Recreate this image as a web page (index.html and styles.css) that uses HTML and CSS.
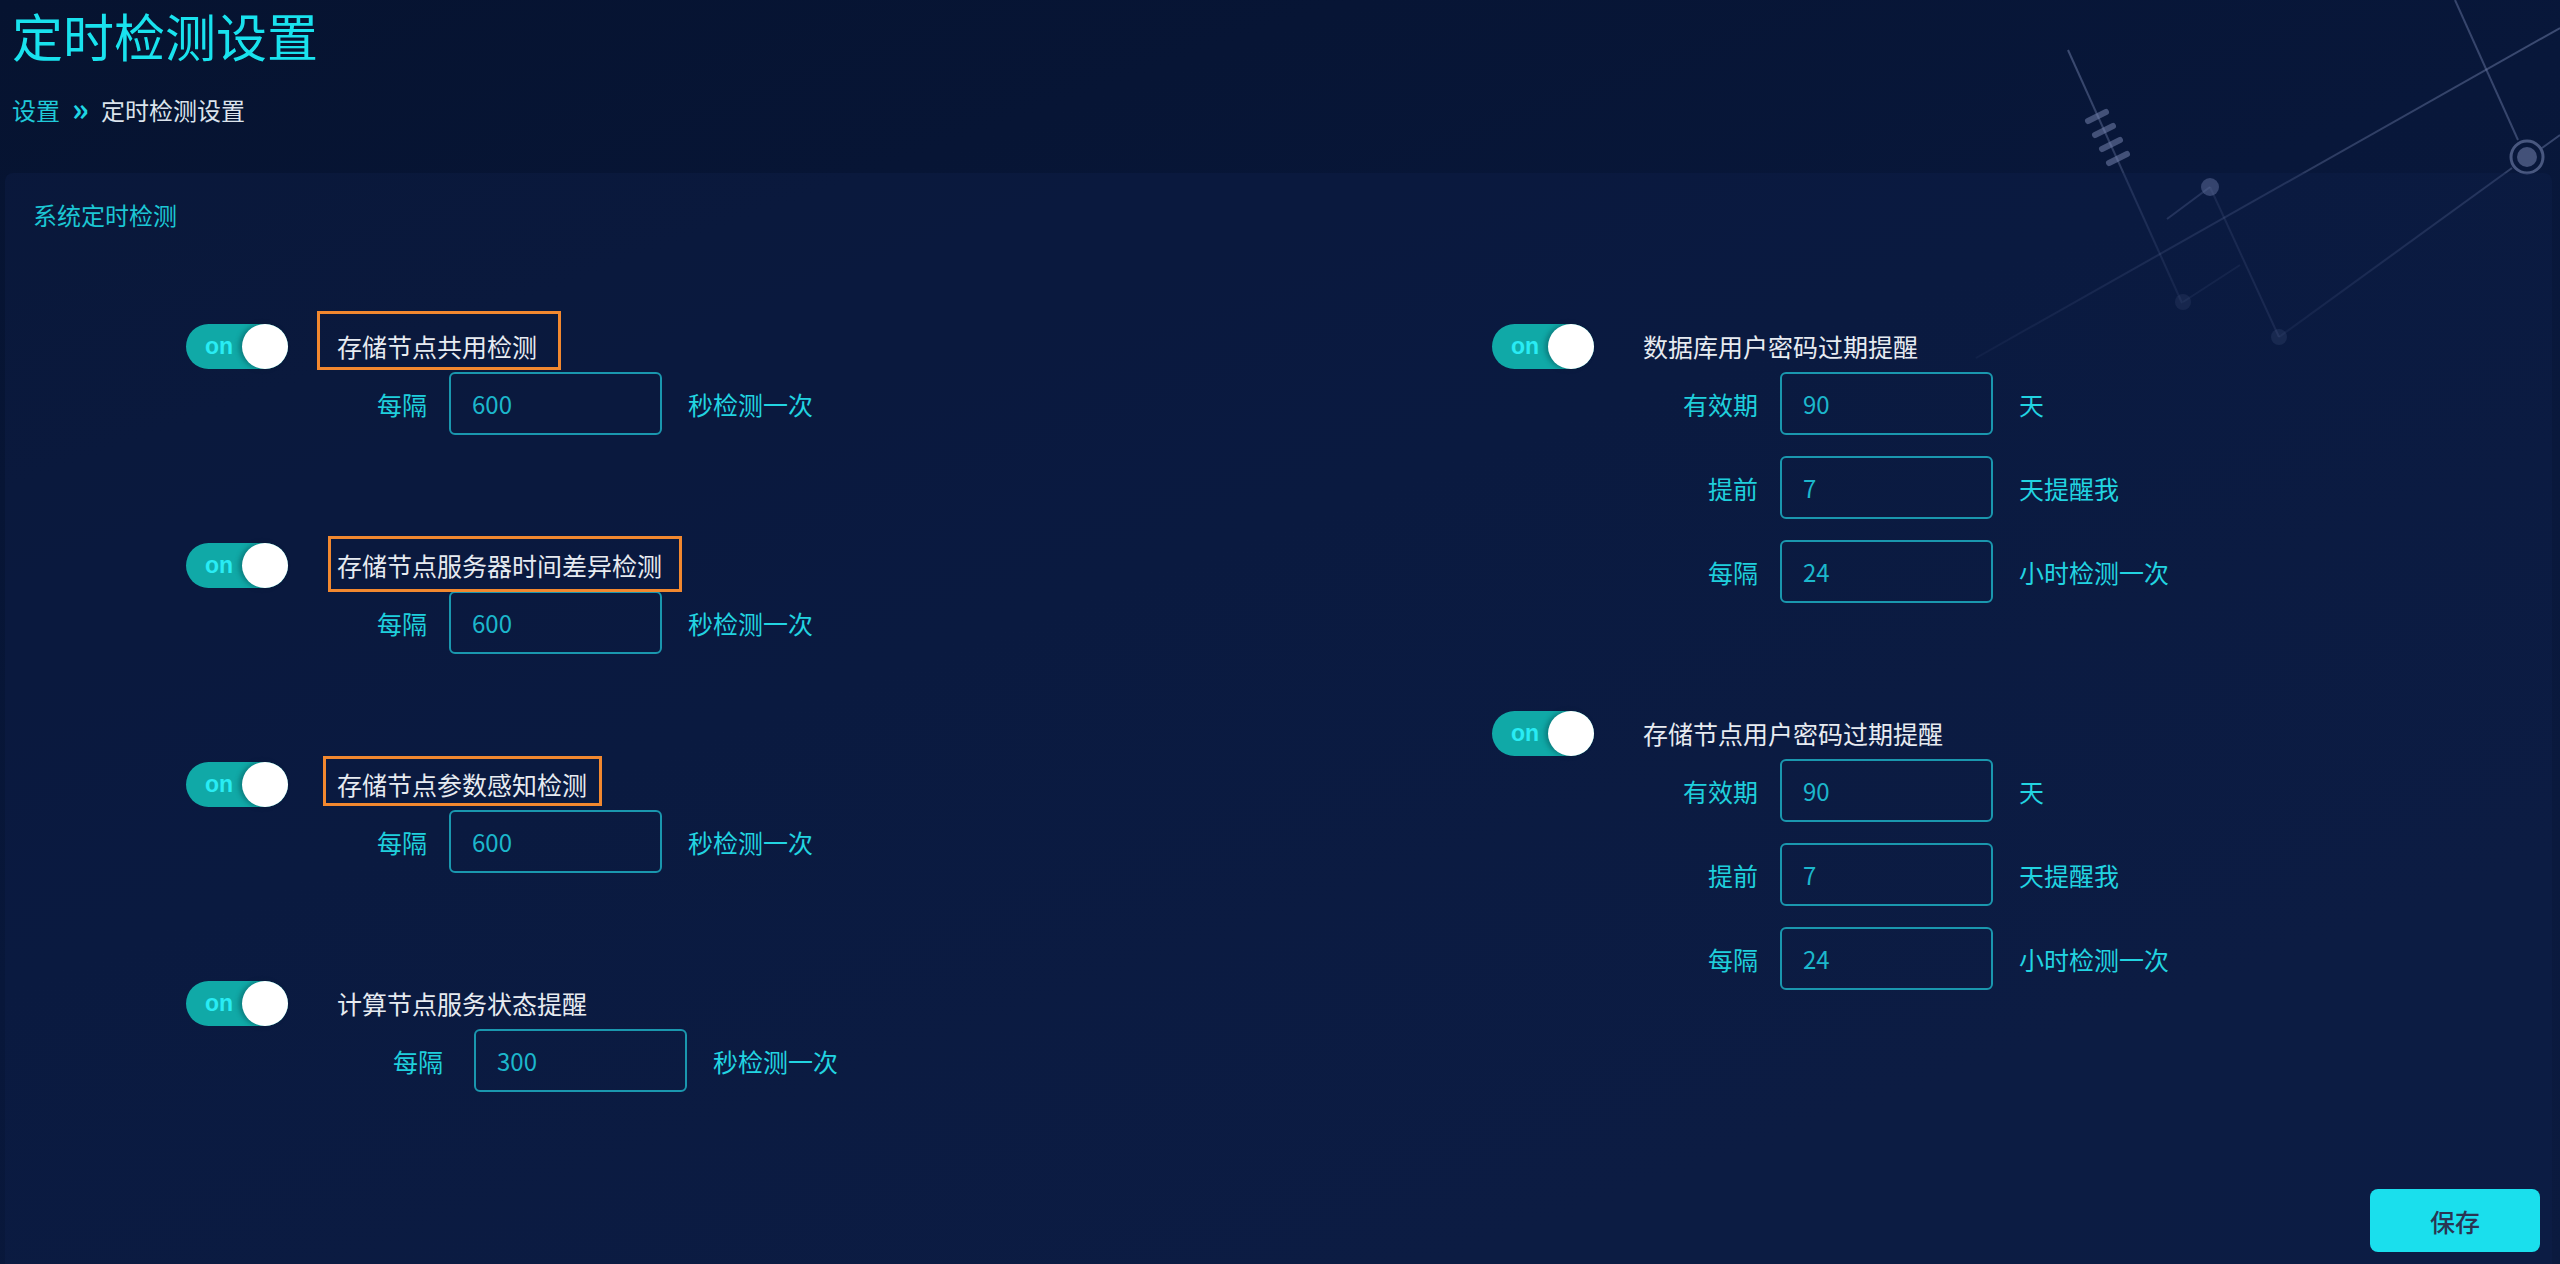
FILE: index.html
```html
<!DOCTYPE html>
<html lang="zh-CN">
<head>
<meta charset="utf-8">
<title>定时检测设置</title>
<link rel="stylesheet" href="styles.css">
</head>
<body>
<svg class="circuit" width="700" height="420" viewBox="1860 0 700 420" xmlns="http://www.w3.org/2000/svg">
  <defs>
    <linearGradient id="fadeA" gradientUnits="userSpaceOnUse" x1="1976" y1="358" x2="2560" y2="28">
      <stop offset="0" stop-color="#7d8cb8" stop-opacity="0.08"/>
      <stop offset="0.55" stop-color="#7d8cb8" stop-opacity="0.3"/>
      <stop offset="1" stop-color="#7d8cb8" stop-opacity="0.45"/>
    </linearGradient>
    <linearGradient id="fadeB" gradientUnits="userSpaceOnUse" x1="2068" y1="50" x2="2182" y2="303">
      <stop offset="0" stop-color="#7d8cb8" stop-opacity="0.45"/>
      <stop offset="1" stop-color="#7d8cb8" stop-opacity="0.12"/>
    </linearGradient>
    <linearGradient id="fadeC" gradientUnits="userSpaceOnUse" x1="2279" y1="337" x2="2560" y2="135">
      <stop offset="0" stop-color="#7d8cb8" stop-opacity="0.1"/>
      <stop offset="1" stop-color="#7d8cb8" stop-opacity="0.4"/>
    </linearGradient>
  </defs>
  <g fill="none" stroke-width="2">
    <line x1="2068" y1="50" x2="2182" y2="303" stroke="url(#fadeB)"/>
    <line x1="1976" y1="358" x2="2560" y2="28" stroke="url(#fadeA)"/>
    <line x1="2167" y1="219" x2="2210" y2="187" stroke="#7d8cb8" stroke-opacity="0.3"/>
    <line x1="2210" y1="187" x2="2279" y2="337" stroke="#7d8cb8" stroke-opacity="0.18"/>
    <line x1="2183" y1="302" x2="2240" y2="265" stroke="#7d8cb8" stroke-opacity="0.12"/>
    <line x1="2279" y1="337" x2="2512" y2="168" stroke="url(#fadeC)"/>
    <line x1="2542" y1="148" x2="2560" y2="135" stroke="#7d8cb8" stroke-opacity="0.4"/>
    <line x1="2455" y1="0" x2="2518" y2="140" stroke="#7d8cb8" stroke-opacity="0.4"/>
    <circle cx="2527" cy="157" r="16" stroke="#7d8cb8" stroke-opacity="0.55" stroke-width="3"/>
  </g>
  <g stroke="#7d8cb8" stroke-opacity="0.5" stroke-width="6" stroke-linecap="round">
    <line x1="2088" y1="121" x2="2106" y2="112"/>
    <line x1="2095" y1="135" x2="2113" y2="126"/>
    <line x1="2102" y1="149" x2="2120" y2="140"/>
    <line x1="2109" y1="163" x2="2127" y2="154"/>
  </g>
  <g fill="#7d8cb8">
    <circle cx="2210" cy="187" r="9" fill-opacity="0.5"/>
    <circle cx="2527" cy="157" r="10" fill-opacity="0.5"/>
    <circle cx="2183" cy="302" r="8" fill-opacity="0.15"/>
    <circle cx="2279" cy="337" r="8" fill-opacity="0.17"/>
  </g>
</svg>

<header class="page-head">
  <h1 class="page-title">定时检测设置</h1>
  <nav class="crumbs">
    <span class="crumb-link">设置</span>
    <span class="crumb-sep">»</span>
    <span class="crumb-current">定时检测设置</span>
  </nav>
</header>

<section class="panel">
  <div class="panel-title">系统定时检测</div>

  <div class="columns">
    <div class="col col-left">
      <div class="group">
        <div class="head">
          <div class="switch"><span class="switch-text">on</span><span class="knob"></span></div>
          <span class="head-label mark mark-1">存储节点共用检测</span>
        </div>
        <div class="row row-narrow">
          <span class="row-label">每隔</span>
          <input class="field" type="text" value="600">
          <span class="row-suffix">秒检测一次</span>
        </div>
      </div>

      <div class="group">
        <div class="head">
          <div class="switch"><span class="switch-text">on</span><span class="knob"></span></div>
          <span class="head-label mark mark-2">存储节点服务器时间差异检测</span>
        </div>
        <div class="row row-narrow">
          <span class="row-label">每隔</span>
          <input class="field" type="text" value="600">
          <span class="row-suffix">秒检测一次</span>
        </div>
      </div>

      <div class="group">
        <div class="head">
          <div class="switch"><span class="switch-text">on</span><span class="knob"></span></div>
          <span class="head-label mark mark-3">存储节点参数感知检测</span>
        </div>
        <div class="row row-narrow">
          <span class="row-label">每隔</span>
          <input class="field" type="text" value="600">
          <span class="row-suffix">秒检测一次</span>
        </div>
      </div>

      <div class="group">
        <div class="head">
          <div class="switch"><span class="switch-text">on</span><span class="knob"></span></div>
          <span class="head-label">计算节点服务状态提醒</span>
        </div>
        <div class="row row-loose">
          <span class="row-label">每隔</span>
          <input class="field" type="text" value="300">
          <span class="row-suffix">秒检测一次</span>
        </div>
      </div>
    </div>

    <div class="col col-right">
      <div class="group">
        <div class="head">
          <div class="switch"><span class="switch-text">on</span><span class="knob"></span></div>
          <span class="head-label">数据库用户密码过期提醒</span>
        </div>
        <div class="rows">
          <div class="row">
            <span class="row-label">有效期</span>
            <input class="field" type="text" value="90">
            <span class="row-suffix">天</span>
          </div>
          <div class="row">
            <span class="row-label">提前</span>
            <input class="field" type="text" value="7">
            <span class="row-suffix">天提醒我</span>
          </div>
          <div class="row">
            <span class="row-label">每隔</span>
            <input class="field" type="text" value="24">
            <span class="row-suffix">小时检测一次</span>
          </div>
        </div>
      </div>

      <div class="group">
        <div class="head">
          <div class="switch"><span class="switch-text">on</span><span class="knob"></span></div>
          <span class="head-label">存储节点用户密码过期提醒</span>
        </div>
        <div class="rows">
          <div class="row">
            <span class="row-label">有效期</span>
            <input class="field" type="text" value="90">
            <span class="row-suffix">天</span>
          </div>
          <div class="row">
            <span class="row-label">提前</span>
            <input class="field" type="text" value="7">
            <span class="row-suffix">天提醒我</span>
          </div>
          <div class="row">
            <span class="row-label">每隔</span>
            <input class="field" type="text" value="24">
            <span class="row-suffix">小时检测一次</span>
          </div>
        </div>
      </div>
    </div>
  </div>

  <button class="save-btn" type="button">保存</button>
</section>
</body>
</html>
```

FILE: styles.css
```css
* { box-sizing: border-box; }

html, body {
  margin: 0;
  height: 100%;
}

body {
  position: relative;
  display: flex;
  flex-direction: column;
  height: 100vh;
  overflow: hidden;
  font-family: "Noto Sans CJK SC", "Noto Sans", sans-serif;
  background: linear-gradient(160deg, #061330 0%, #08173a 45%, #0b1a3f 100%);
  color: #e6ebf2;
}

.circuit {
  position: absolute;
  top: 0;
  right: 0;
  z-index: 0;
  pointer-events: none;
}

.page-head {
  position: relative;
  z-index: 1;
  padding: 5px 0 0 12px;
}

.page-title {
  margin: 0;
  font-size: 51px;
  line-height: 60px;
  font-weight: 400;
  color: #19e2ee;
}

.crumbs {
  display: flex;
  align-items: center;
  margin-top: 27px;
  height: 36px;
  font-size: 24px;
  line-height: 36px;
}

.crumb-link { color: #1fcad9; }

.crumb-sep {
  margin: 0 12px 0 12px;
  font-size: 32px;
  font-weight: 700;
  color: #1fd6e4;
  line-height: 30px;
  position: relative;
  top: -3px;
}

.crumb-current { color: #dbe3ec; }

.panel {
  position: relative;
  z-index: 1;
  flex: 1;
  display: flex;
  flex-direction: column;
  margin: 45px 8px 0 5px;
  padding: 24px 12px 12px 28px;
  background: rgba(18, 36, 82, 0.28);
  border-radius: 8px 8px 0 0;
}

.panel-title {
  font-size: 24px;
  line-height: 36px;
  color: #1cc7d4;
}

.columns {
  display: flex;
  margin-top: 91px;
  padding-left: 153px;
}

.col {
  display: flex;
  flex-direction: column;
  gap: 108px;
}

.col-left { width: 1306px; }
.col-right { flex: 1; }

.group {
  display: flex;
  flex-direction: column;
}

.head {
  display: flex;
  align-items: center;
  height: 45px;
  margin-bottom: 3px;
}

.switch {
  position: relative;
  display: flex;
  align-items: center;
  width: 102px;
  height: 45px;
  border-radius: 23px;
  background: #10a9a7;
  flex-shrink: 0;
}

.switch-text {
  padding-left: 19px;
  font-family: "Liberation Sans", Arial, sans-serif;
  font-weight: 700;
  font-size: 23px;
  color: #29ecf4;
  line-height: 1;
}

.knob {
  position: absolute;
  top: 0;
  right: 0;
  width: 46px;
  height: 45px;
  border-radius: 50%;
  background: #ffffff;
  box-shadow: -3px 0 5px rgba(0, 40, 50, 0.35);
}

.head-label {
  position: relative;
  margin-left: 49px;
  font-size: 25px;
  line-height: 35px;
  color: #e7ebf1;
  white-space: nowrap;
}

.mark::after {
  content: "";
  position: absolute;
  border: 3px solid #f2882f;
}

.mark-1::after { left: -20px; right: -24px; top: -18px; bottom: -6px; }
.mark-2::after { left: -9px; right: -20px; top: -12px; bottom: -9px; }
.mark-3::after { left: -14px; right: -15px; top: -11px; bottom: -4px; }

.rows {
  display: flex;
  flex-direction: column;
  gap: 21px;
}

.row {
  display: flex;
  align-items: center;
  height: 63px;
}

.row-label {
  width: 266px;
  margin-right: 22px;
  text-align: right;
  font-size: 25px;
  color: #1fcfdc;
  white-space: nowrap;
}

.row-narrow .row-label { width: 241px; }

.row-loose .row-label {
  width: 257px;
  margin-right: 31px;
}

.field {
  width: 213px;
  height: 63px;
  padding: 0 0 0 21px;
  border: 2px solid #1a97ae;
  border-radius: 6px;
  background: transparent;
  font-family: "Noto Sans CJK SC", "Noto Sans", sans-serif;
  font-size: 24px;
  color: #1cb7cc;
  outline: none;
}

.row-suffix {
  margin-left: 26px;
  font-size: 25px;
  color: #22d4e1;
  white-space: nowrap;
}

.save-btn {
  margin-top: auto;
  align-self: flex-end;
  width: 170px;
  height: 63px;
  border: none;
  border-radius: 8px;
  background: #1adfed;
  font-family: "Noto Sans CJK SC", "Noto Sans", sans-serif;
  font-size: 25px;
  font-weight: 500;
  color: #2a3553;
  cursor: pointer;
}
```
